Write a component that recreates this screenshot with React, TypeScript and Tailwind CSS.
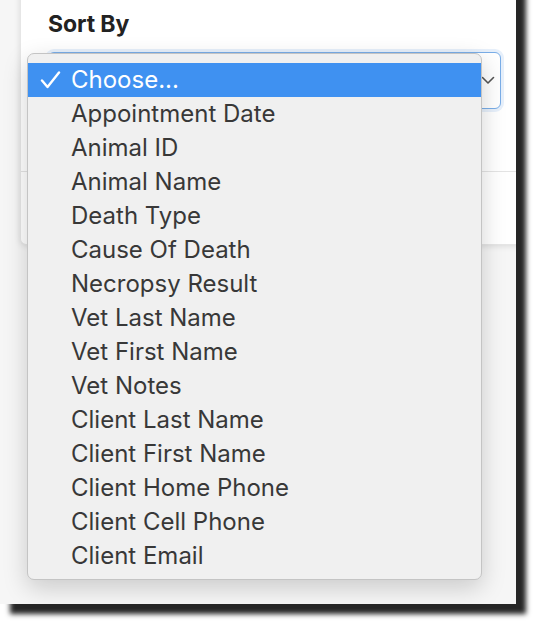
import React from "react";

const items = [
  "Appointment Date",
  "Animal ID",
  "Animal Name",
  "Death Type",
  "Cause Of Death",
  "Necropsy Result",
  "Vet Last Name",
  "Vet First Name",
  "Vet Notes",
  "Client Last Name",
  "Client First Name",
  "Client Home Phone",
  "Client Cell Phone",
  "Client Email",
];

export default function App() {
  return (
    <div className="w-[534px] h-[622px] bg-white overflow-hidden" style={{ fontFamily: "Inter, 'Noto Sans', sans-serif" }}>
      <div className="relative -mt-5 w-[516px] h-[624px] bg-[#f6f6f6] shadow-[10px_10px_5px_rgba(0,0,0,0.85)]">
        <div className="absolute inset-0 overflow-hidden">
          {/* card */}
          <div className="ml-[20px] w-[520px] h-[265px] bg-white rounded-bl-md shadow-[0_1px_6px_rgba(0,0,0,0.12)] border-l border-b border-[#e6e6e6] flex flex-col">
            <div className="pt-[30px] pl-[27px]">
              <div className="text-[23px] font-bold text-[#222] leading-[28px] tracking-[-0.1px]">Sort By</div>
              <div className="mt-[14px] h-[57px] w-[453px] rounded-md border border-[#7aaee8] shadow-[0_0_0_3px_rgba(120,170,235,0.18)] bg-white flex items-center justify-end pr-[5px]">
                <svg width="14" height="9" viewBox="0 0 14 9" fill="none">
                  <path d="M1.5 1.5 L7 7 L12.5 1.5" stroke="#555" strokeWidth="1.6" strokeLinecap="round" strokeLinejoin="round" />
                </svg>
              </div>
            </div>
            <div className="mt-[62px] border-t border-[#e4e4e4]" />
          </div>
        </div>
        {/* dropdown menu */}
        <div className="absolute left-[27px] top-[73px] w-[455px] h-[527px] rounded-[7px] bg-[#f0f0f0] border border-[#c4c4c4] shadow-[0_8px_24px_rgba(0,0,0,0.18)] pt-[9px] text-[24px] text-[#383838]">
          <div className="h-[34px] bg-[#3f91f1] text-white flex items-center">
            <span className="w-[43px] pl-[12px] flex items-center">
              <svg width="21" height="18" viewBox="0 0 21 18" fill="none">
                <path d="M2 9.5 L7.5 16 L19 1.5" stroke="#fff" strokeWidth="2.4" strokeLinecap="round" strokeLinejoin="round" />
              </svg>
            </span>
            <span>Choose...</span>
          </div>
          {items.map((t) => (
            <div key={t} className="h-[34px] flex items-center pl-[43px]">
              {t}
            </div>
          ))}
        </div>
      </div>
    </div>
  );
}
